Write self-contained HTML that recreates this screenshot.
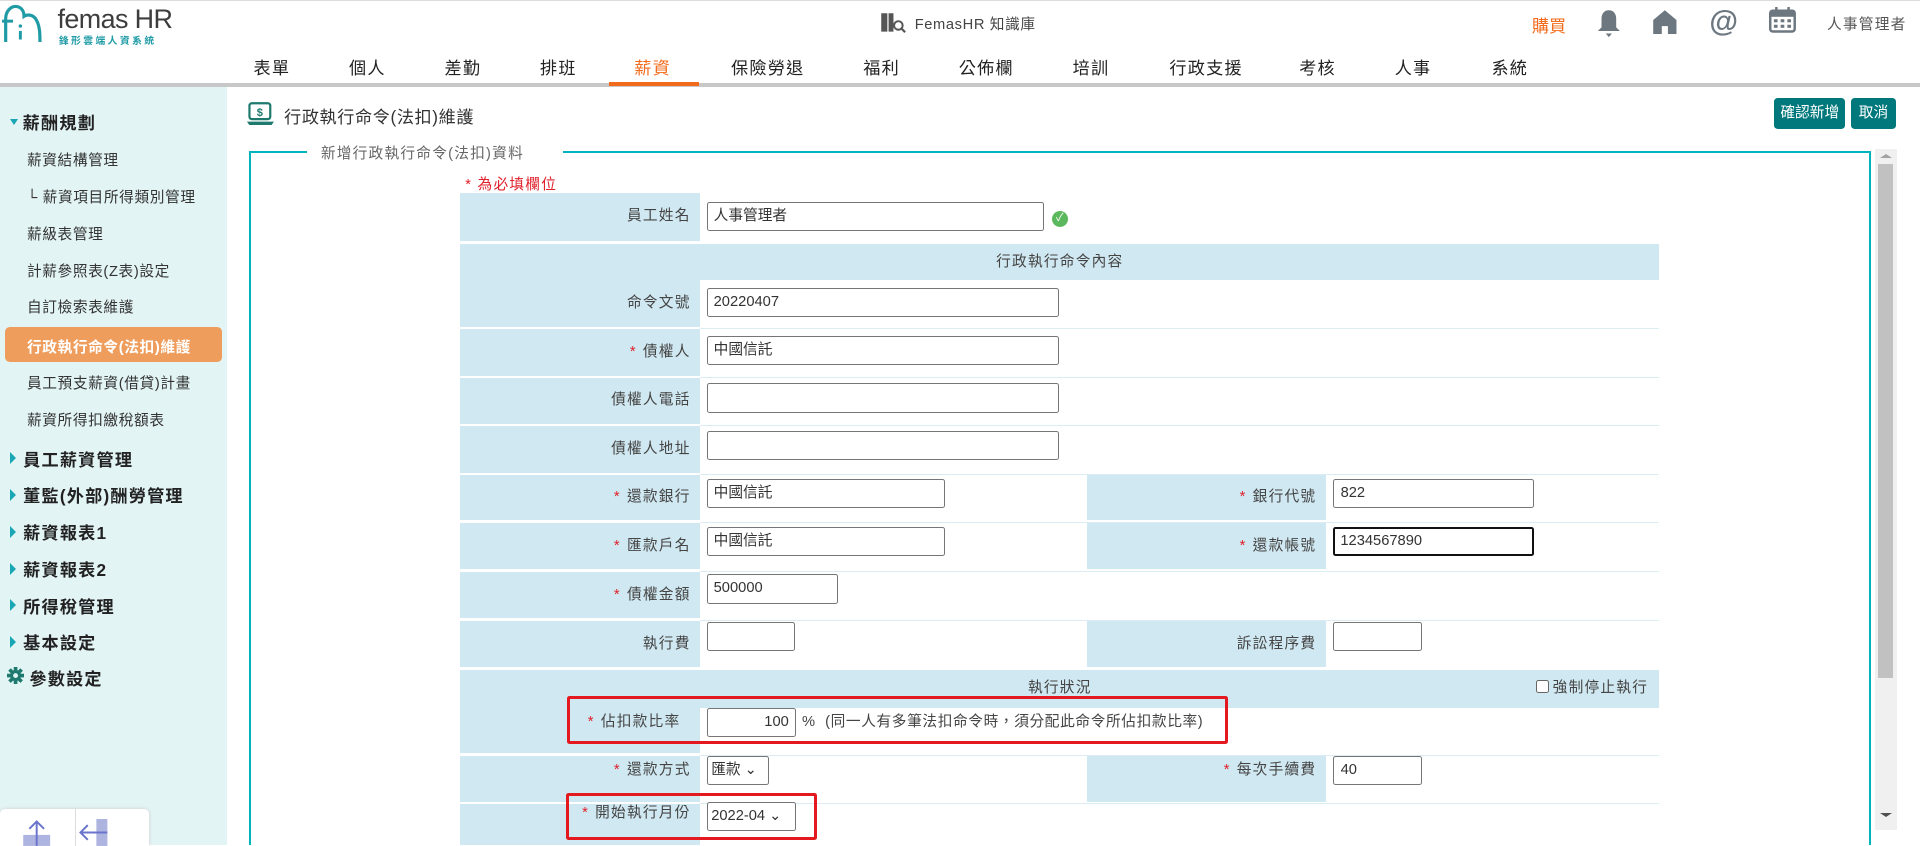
<!DOCTYPE html>
<html><head><meta charset="utf-8">
<style>
html{zoom:1.2245}
*{box-sizing:border-box;margin:0;padding:0}
body{width:1568px;height:690px;overflow:hidden;background:#fff;font-family:"Liberation Sans","Noto Sans CJK TC",sans-serif;color:#333;position:relative}
.abs{position:absolute}
.nav{top:44px;font-size:14px;color:#222;letter-spacing:1px}
.side{left:0;top:71px;width:185px;height:619px;background:#e3f4f5}
.si{position:absolute;left:22px;font-size:12px;color:#333;letter-spacing:.5px}
.sg{position:absolute;left:8px;font-size:14px;color:#222;font-weight:bold;letter-spacing:1px}
.sg:before{content:"";display:inline-block;border-left:5px solid #19a7b5;border-top:5px solid transparent;border-bottom:5px solid transparent;margin-right:6px;vertical-align:1px}
.lab{position:absolute;background:#d0e8f1;font-size:12px;color:#444;text-align:right;padding-right:8px;letter-spacing:1px}
.row{position:absolute;left:572px;width:783px;border-bottom:1px solid #dcecf3}
.inp{position:absolute;height:24px;border:1px solid #767676;border-radius:2px;font-size:12px;color:#333;padding:0 5px;background:#fff;line-height:22px}
.r{color:#e0202a;margin-right:5px}
.hdr{position:absolute;left:376px;width:979px;background:#d0e8f1;font-size:12px;color:#444;text-align:center;letter-spacing:1px}
</style></head><body>
<div class="abs" style="left:0;top:0;width:1568px;height:1px;background:#ddd"></div>
<!-- logo -->
<svg class="abs" style="left:2px;top:3px" width="34" height="32" viewBox="0 0 34 32"><path d="M3 31V12c0-6 4-10 8-10s7 3 7 8c3-2 8-1 10 3 3 5 3 12 3 18" fill="none" stroke="#1f9ba6" stroke-width="2.6"/><path d="M0 14h9" stroke="#1f9ba6" stroke-width="2.4"/><circle cx="15" cy="18" r="1.4" fill="#1f9ba6"/><path d="M15 22v7" stroke="#1f9ba6" stroke-width="2.4"/></svg>
<div class="abs" style="left:47px;top:3px;font-size:22px;color:#3d3d3d;letter-spacing:-.5px">femas HR</div>
<div class="abs" style="left:48px;top:27px;font-size:8px;color:#1f9ba6;letter-spacing:2px;font-weight:bold">鋒形雲端人資系統</div>
<!-- knowledge -->
<svg class="abs" style="left:719px;top:10px" width="22" height="18" viewBox="0 0 22 18"><path d="M1 1h5v15H1zM7 1h4v15H7z" fill="#555"/><circle cx="15" cy="11" r="3.5" fill="none" stroke="#555" stroke-width="1.6"/><path d="M17.5 13.5l3 3" stroke="#555" stroke-width="1.8"/></svg>
<div class="abs" style="left:747px;top:11px;font-size:12px;color:#444;letter-spacing:.5px">FemasHR 知識庫</div>
<div class="abs" style="left:1251px;top:10px;font-size:14px;color:#f26b1d">購買</div>
<svg class="abs" style="left:1303px;top:7px" width="21" height="24" viewBox="0 0 21 24"><path d="M10.5 1c4 0 6 3 6 7v7l3 3H1.5l3-3V8c0-4 2-7 6-7z" fill="#6d7780"/><path d="M8 20h5l-2.5 3z" fill="#6d7780"/></svg>
<svg class="abs" style="left:1349px;top:7px" width="21" height="21" viewBox="0 0 21 21"><path d="M10.5 1L1 9v12h7v-7h5v7h7V9z" fill="#6d7780"/></svg>
<div class="abs" style="left:1396px;top:4px;font-size:24px;font-weight:bold;color:#6d7780">@</div>
<svg class="abs" style="left:1445px;top:6px" width="22" height="21" viewBox="0 0 22 21"><rect x="1" y="3" width="20" height="17" rx="2" fill="none" stroke="#6d7780" stroke-width="2"/><rect x="1" y="3" width="20" height="5" fill="#6d7780"/><path d="M6 0v4M16 0v4" stroke="#6d7780" stroke-width="2"/><g fill="#6d7780"><rect x="4" y="10" width="3" height="2.5"/><rect x="9.5" y="10" width="3" height="2.5"/><rect x="15" y="10" width="3" height="2.5"/><rect x="4" y="14.5" width="3" height="2.5"/><rect x="9.5" y="14.5" width="3" height="2.5"/><rect x="15" y="14.5" width="3" height="2.5"/></g></svg>
<div class="abs" style="left:1492px;top:11px;font-size:12px;color:#555;letter-spacing:1px">人事管理者</div>
<!-- nav -->
<div class="abs nav" style="left:207px">表單</div>
<div class="abs nav" style="left:285px">個人</div>
<div class="abs nav" style="left:363px">差勤</div>
<div class="abs nav" style="left:441px">排班</div>
<div class="abs nav" style="left:518px;color:#f26b1d">薪資</div>
<div class="abs nav" style="left:597px">保險勞退</div>
<div class="abs nav" style="left:705px">福利</div>
<div class="abs nav" style="left:783px">公佈欄</div>
<div class="abs nav" style="left:876px">培訓</div>
<div class="abs nav" style="left:955px">行政支援</div>
<div class="abs nav" style="left:1061px">考核</div>
<div class="abs nav" style="left:1139px">人事</div>
<div class="abs nav" style="left:1218px">系統</div>
<div class="abs" style="left:0;top:68px;width:1568px;height:3px;background:#c8c8c8"></div>
<div class="abs" style="left:497px;top:67px;width:74px;height:3px;background:#f26b1d"></div>
<!-- sidebar -->
<div class="abs side">
<div class="abs" style="left:8px;top:18px;font-size:14px;font-weight:bold;color:#222;letter-spacing:1px"><span style="display:inline-block;border-top:5px solid #19a7b5;border-left:4px solid transparent;border-right:4px solid transparent;margin-right:4px;vertical-align:3px"></span>薪酬規劃</div>
<div class="si" style="top:51px">薪資結構管理</div>
<div class="si" style="top:81px">└ 薪資項目所得類別管理</div>
<div class="si" style="top:111px">薪級表管理</div>
<div class="si" style="top:141px">計薪參照表(Z表)設定</div>
<div class="si" style="top:171px">自訂檢索表維護</div>
<div class="abs" style="left:4px;top:196px;width:177px;height:29px;background:#ee9d5c;border-radius:4px"></div>
<div class="si" style="top:203px;color:#fff;font-weight:bold">行政執行命令(法扣)維護</div>
<div class="si" style="top:233px">員工預支薪資(借貸)計畫</div>
<div class="si" style="top:263px">薪資所得扣繳稅額表</div>
<div class="sg" style="top:293px">員工薪資管理</div>
<div class="sg" style="top:323px">董監(外部)酬勞管理</div>
<div class="sg" style="top:353px">薪資報表1</div>
<div class="sg" style="top:383px">薪資報表2</div>
<div class="sg" style="top:413px">所得稅管理</div>
<div class="sg" style="top:443px">基本設定</div>
<svg class="abs" style="left:6px;top:474px" width="14" height="14" viewBox="0 0 14 14"><g fill="#1e7a6e"><circle cx="7" cy="7" r="4.5"/><rect x="5.5" y="0" width="3" height="14"/><rect x="0" y="5.5" width="14" height="3"/><rect x="5.5" y="0" width="3" height="14" transform="rotate(45 7 7)"/><rect x="5.5" y="0" width="3" height="14" transform="rotate(-45 7 7)"/></g><circle cx="7" cy="7" r="2" fill="#e3f4f5"/></svg>
<div class="abs" style="left:24px;top:472px;font-size:14px;font-weight:bold;color:#222;letter-spacing:1px">參數設定</div>
<div class="abs" style="left:0;top:590px;width:122px;height:30px;background:#fff;border-radius:4px 4px 0 0;box-shadow:0 0 3px #ccc"></div>
<div class="abs" style="left:61px;top:590px;width:1px;height:30px;background:#ddd"></div>
<svg class="abs" style="left:18px;top:598px" width="24" height="22" viewBox="0 0 24 22"><rect x="1" y="13" width="22" height="9" fill="#aeb4e0"/><path d="M12 22V2M6 8l6-6 6 6" fill="none" stroke="#6a74cc" stroke-width="1.6"/></svg>
<svg class="abs" style="left:64px;top:598px" width="26" height="22" viewBox="0 0 26 22"><rect x="15" y="0" width="9" height="22" fill="#aeb4e0"/><path d="M24 11H2M8 5l-6 6 6 6" fill="none" stroke="#6a74cc" stroke-width="1.6"/></svg>
</div>
<!-- page header -->
<svg class="abs" style="left:202px;top:83px" width="22" height="19" viewBox="0 0 22 19"><rect x="2" y="1" width="17" height="13" rx="2" fill="none" stroke="#1e7a6e" stroke-width="1.8"/><text x="10.5" y="11.5" font-size="9" font-weight="bold" text-anchor="middle" fill="#1e7a6e" font-family="Liberation Sans">$</text><path d="M0 16h22l-2 3H2z" fill="#1e7a6e"/></svg>
<div class="abs" style="left:232px;top:84px;font-size:14px;color:#333;letter-spacing:.5px">行政執行命令(法扣)維護</div>
<div class="abs" style="left:1449px;top:80px;width:58px;height:25px;background:#00787c;border-radius:3px;color:#fff;font-size:12px;text-align:center;line-height:25px">確認新增</div>
<div class="abs" style="left:1512px;top:80px;width:36px;height:25px;background:#00787c;border-radius:3px;color:#fff;font-size:12px;text-align:center;line-height:25px">取消</div>
<!-- fieldset -->
<div class="abs" style="left:203px;top:123px;width:2px;height:567px;background:#00b4be"></div>
<div class="abs" style="left:203px;top:123px;width:48px;height:2px;background:#00b4be"></div>
<div class="abs" style="left:460px;top:123px;width:1068px;height:2px;background:#00b4be"></div>
<div class="abs" style="left:1526px;top:123px;width:2px;height:567px;background:#00b4be"></div>
<div class="abs" style="left:262px;top:116px;font-size:12px;color:#666;letter-spacing:1px">新增行政執行命令(法扣)資料</div>
<!-- scrollbar -->
<div class="abs" style="left:1531px;top:122px;width:18px;height:556px;background:#f0f0f0"></div>
<div class="abs" style="left:1534px;top:134px;width:12px;height:420px;background:#c1c1c1"></div>
<div class="abs" style="left:1535px;top:126px;border-left:5px solid transparent;border-right:5px solid transparent;border-bottom:4px solid #a3a3a3"></div>
<div class="abs" style="left:1535px;top:664px;border-left:5px solid transparent;border-right:5px solid transparent;border-top:4px solid #505050"></div>
<!-- form -->
<div class="abs" style="left:380px;top:141px;font-size:12px;color:#e0202a;letter-spacing:1px">* 為必填欄位</div>

<div class="lab" style="left:376px;top:158px;width:196px;height:39px;line-height:39px">員工姓名</div>
<div class="inp" style="left:577px;top:165px;width:276px">人事管理者</div>
<div class="abs" style="left:859px;top:172px;width:13px;height:13px;border-radius:50%;background:#5cb85c;color:#fff;font-size:9px;text-align:center;line-height:13px">✓</div>

<div class="hdr" style="top:199px;height:30px;line-height:30px">行政執行命令內容</div>

<div class="lab" style="left:376px;top:229px;width:196px;height:38px;line-height:38px">命令文號</div>
<div class="row" style="top:229px;height:40px"></div>
<div class="inp" style="left:577px;top:235px;width:288px">20220407</div>

<div class="lab" style="left:376px;top:269px;width:196px;height:38px;line-height:38px"><span class="r">*</span>債權人</div>
<div class="row" style="top:269px;height:40px"></div>
<div class="inp" style="left:577px;top:274px;width:288px">中國信託</div>

<div class="lab" style="left:376px;top:309px;width:196px;height:37px;line-height:37px">債權人電話</div>
<div class="row" style="top:309px;height:39px"></div>
<div class="inp" style="left:577px;top:313px;width:288px"></div>

<div class="lab" style="left:376px;top:348px;width:196px;height:38px;line-height:38px">債權人地址</div>
<div class="row" style="top:348px;height:40px"></div>
<div class="inp" style="left:577px;top:352px;width:288px"></div>

<div class="lab" style="left:376px;top:388px;width:196px;height:37px;line-height:37px"><span class="r">*</span>還款銀行</div>
<div class="lab" style="left:888px;top:388px;width:195px;height:37px;line-height:37px"><span class="r">*</span>銀行代號</div>
<div class="row" style="top:388px;height:39px"></div>
<div class="inp" style="left:577px;top:391px;width:195px">中國信託</div>
<div class="inp" style="left:1089px;top:391px;width:164px">822</div>

<div class="lab" style="left:376px;top:427px;width:196px;height:38px;line-height:38px"><span class="r">*</span>匯款戶名</div>
<div class="lab" style="left:888px;top:427px;width:195px;height:38px;line-height:38px"><span class="r">*</span>還款帳號</div>
<div class="row" style="top:427px;height:40px"></div>
<div class="inp" style="left:577px;top:430px;width:195px">中國信託</div>
<div class="inp" style="left:1089px;top:430px;width:164px;border:2px solid #111;padding:0 4px;line-height:20px">1234567890</div>

<div class="lab" style="left:376px;top:467px;width:196px;height:38px;line-height:38px"><span class="r">*</span>債權金額</div>
<div class="row" style="top:467px;height:40px"></div>
<div class="inp" style="left:577px;top:469px;width:107px">500000</div>

<div class="lab" style="left:376px;top:507px;width:196px;height:38px;line-height:38px">執行費</div>
<div class="lab" style="left:888px;top:507px;width:195px;height:38px;line-height:38px">訴訟程序費</div>
<div class="inp" style="left:577px;top:508px;width:72px"></div>
<div class="inp" style="left:1089px;top:508px;width:72px"></div>

<div class="hdr" style="top:547px;height:31px;line-height:31px">執行狀況</div>
<div class="abs" style="left:1254px;top:548px;font-size:12px;color:#444;line-height:29px;letter-spacing:1px"><span style="display:inline-block;width:11px;height:11px;border:1px solid #666;border-radius:2px;vertical-align:-1px;margin-right:3px;background:#fff"></span>強制停止執行</div>

<div class="lab" style="left:376px;top:578px;width:196px;height:37px">&nbsp;</div>
<div class="abs" style="left:480px;top:578px;font-size:12px;color:#444;line-height:24px;letter-spacing:1px"><span class="r">*</span>佔扣款比率</div>
<div class="row" style="top:578px;height:39px"></div>
<div class="inp" style="left:577px;top:578px;width:73px;text-align:right">100</div>
<div class="abs" style="left:655px;top:578px;font-size:12px;color:#444;line-height:24px;letter-spacing:.5px">% &nbsp;(同一人有多筆法扣命令時，須分配此命令所佔扣款比率)</div>
<div class="abs" style="left:463px;top:568px;width:540px;height:40px;border:3px solid #e3191f;border-radius:2px"></div>

<div class="lab" style="left:376px;top:617px;width:196px;height:38px;line-height:24px"><span class="r">*</span>還款方式</div>
<div class="lab" style="left:888px;top:617px;width:195px;height:38px;line-height:24px"><span class="r">*</span>每次手續費</div>
<div class="row" style="top:617px;height:40px"></div>
<div class="inp" style="left:577px;top:617px;width:51px;padding:0 3px">匯款 ⌄</div>
<div class="inp" style="left:1089px;top:617px;width:72px">40</div>

<div class="lab" style="left:376px;top:657px;width:196px;height:33px;line-height:16px"><span class="r">*</span>開始執行月份</div>
<div class="inp" style="left:577px;top:655px;width:73px;padding:0 3px">2022-04 ⌄</div>
<div class="abs" style="left:462px;top:648px;width:205px;height:38px;border:3px solid #e3191f;border-radius:2px"></div>
</body></html>
